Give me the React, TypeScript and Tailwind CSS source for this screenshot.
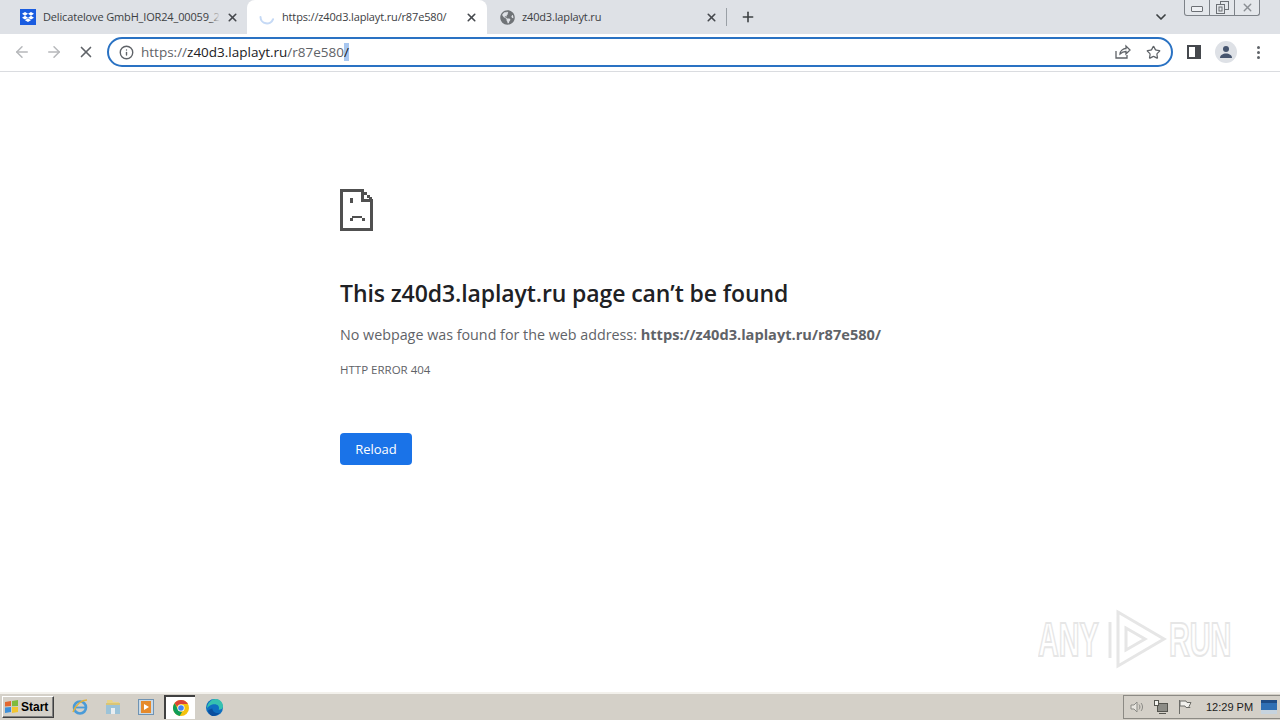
import { ArrowLeft, ArrowRight, ChevronDown, Info, Plus, Star, X } from "lucide-react";
import { FaDropbox, FaGlobeAmericas } from "react-icons/fa";

const sans = "font-['Open_Sans','Noto_Sans',sans-serif]";

function Spinner() {
  return (
    <svg width="16" height="16" viewBox="0 0 16 16" fill="none">
      <path d="M1.5 8a6.5 6.5 0 0 0 12.6 2.2" stroke="#c5d9f5" strokeWidth="2" strokeLinecap="round" />
    </svg>
  );
}

function Tab({ title, active, icon, fade }: { title: string; active?: boolean; icon: React.ReactNode; fade?: boolean }) {
  return (
    <div
      className={`flex items-center h-[34px] pl-3 gap-[7px] shrink-0 ${
        active ? "w-[240px] pr-[9px] bg-white rounded-t-[8px]" : "w-[239px] pr-[8px]"
      }`}
    >
      <span className="w-4 h-4 flex items-center justify-center shrink-0">{icon}</span>
      <span className="relative flex-1 min-w-0 whitespace-nowrap text-[11px] tracking-[-0.15px] text-[#3c4043] leading-4">
        {title}
        {fade && <span className="absolute right-[-1px] top-0 h-full w-[10px] bg-gradient-to-r from-transparent to-[#dee1e6]" />}
      </span>
      <X size={13} strokeWidth={3} className="text-[#45484d] shrink-0" />
    </div>
  );
}

function WindowControls() {
  return (
    <div className="flex self-start h-4 w-[76px] mr-[20px] ml-[15px] border border-t-0 border-[#7d8288] rounded-b-[3px] bg-[#e4e7eb]">
      <div className="w-[25px] flex items-center justify-center border-r border-[#7d8288]">
        <span className="w-[12px] h-[6px] mt-[3px] border border-[#6c7075] rounded-[1px] bg-[#eef0f3]" />
      </div>
      <div className="w-[25px] flex items-center justify-center border-r border-[#7d8288]">
        <svg width="13" height="13" viewBox="0 0 13 13" fill="none" stroke="#6c7075">
          <rect x="4.5" y="0.5" width="8" height="8" />
          <rect x="0.5" y="3.5" width="8" height="9" fill="#e4e7eb" />
          <rect x="3" y="6" width="3" height="4" />
        </svg>
      </div>
      <div className="flex-1 flex items-center justify-center">
        <X size={13} strokeWidth={2.5} className="text-[#8a8e93]" />
      </div>
    </div>
  );
}

function SadFile() {
  // pixel style page icon from the chrome error screen
  return (
    <svg width="33" height="42" viewBox="0 0 33 42" fill="#505050" shapeRendering="crispEdges">
      <rect x="0" y="0" width="22" height="3" />
      <rect x="0" y="0" width="3" height="42" />
      <rect x="0" y="39" width="33" height="3" />
      <rect x="30" y="10" width="3" height="32" />
      <rect x="21" y="0" width="3" height="13" />
      <rect x="21" y="10" width="12" height="3" />
      <rect x="24" y="3" width="3" height="3" />
      <rect x="27" y="6" width="3" height="3" />
      <rect x="29" y="8" width="3" height="3" />
      <rect x="10" y="9" width="3" height="5" />
      <rect x="12" y="27" width="10" height="2" />
      <rect x="10" y="29" width="3" height="3" />
      <rect x="22" y="29" width="3" height="3" />
    </svg>
  );
}

function ChromeLogo() {
  return (
    <svg width="16" height="16" viewBox="0 0 16 16">
      <circle cx="8" cy="8" r="8" fill="#f4c20d" />
      <path d="M8 0a8 8 0 0 1 6.93 4H8a4 4 0 0 0-3.8 2.8L1.6 3.2A8 8 0 0 1 8 0z" fill="#db4437" />
      <path d="M1.6 3.2 5 9.6a4 4 0 0 0 4.2 2.2L6.7 15.9A8 8 0 0 1 1.6 3.2z" fill="#0f9d58" />
      <circle cx="8" cy="8" r="3.6" fill="#fff" />
      <circle cx="8" cy="8" r="2.8" fill="#4285f4" />
    </svg>
  );
}

function TaskbarIcons() {
  return (
    <div className="flex items-center ml-[17px]">
      {/* ie */}
      <svg width="18" height="18" viewBox="0 0 18 18" fill="none" className="mr-[16px]">
        <circle cx="9" cy="9.5" r="6" stroke="#4a9bd8" strokeWidth="2.6" />
        <rect x="4" y="8.6" width="10.5" height="1.8" fill="#4a9bd8" />
        <path d="M2 14C5 6 11 2 16 2" stroke="#e3b23c" strokeWidth="1.5" />
      </svg>
      {/* explorer */}
      <svg width="16" height="16" viewBox="0 0 16 16" className="mr-[17px]">
        <path d="M2 1h5l1 2h6v3H2z" fill="#e8d48a" />
        <path d="M1 6h14v9H1z" fill="#9cc3d8" />
        <rect x="6" y="9" width="4" height="6" fill="#e9eef1" />
        <rect x="1" y="4" width="14" height="2" fill="#d9c577" />
      </svg>
      {/* media player */}
      <svg width="16" height="16" viewBox="0 0 16 16" className="mr-[10px]">
        <rect x="0.5" y="0.5" width="15" height="15" fill="#c9d9e6" stroke="#6f93b3" />
        <rect x="3" y="2" width="10" height="12" fill="#e58a2c" />
        <path d="M6 5l5 3-5 3z" fill="#fff" />
      </svg>
      {/* chrome, pressed */}
      <div className="w-[31px] h-[24px] flex items-center justify-center bg-white border-2 border-b-0 border-r-0 border-[#404040] mr-[11px]">
        <ChromeLogo />
      </div>
      {/* edge */}
      <svg width="17" height="17" viewBox="0 0 16 16">
        <circle cx="8" cy="8" r="8" fill="#0f6fc0" />
        <path d="M1 9C1 3 6 0 9 0c4 0 7 3 7 7 0 2-2 3-4 3 1-3-1-5-4-5-3 0-6 2-7 4z" fill="#35c1b0" />
        <path d="M6 9c0 3 3 5 7 4-2 2-4 3-6 3-3 0-5-3-5-5 1-1 3-2 4-2z" fill="#0b4f9e" />
      </svg>
    </div>
  );
}

function Tray() {
  return (
    <div className="flex items-center h-[24px] ml-auto w-[157px] border border-[#8c8a84] border-r-0 pl-[5px] gap-[8px]">
      <svg width="16" height="16" viewBox="0 0 16 16" fill="none" stroke="#8b8b86" className="shrink-0">
        <path d="M2 6h3l3-3v10l-3-3H2z" fill="#e8e6e0" />
        <path d="M10 5.5c1.2 1.500 1.200 3.500 0 5M12 4c2 2.400 2 5.600 0 8" />
      </svg>
      <svg width="16" height="16" viewBox="0 0 16 16" fill="none" stroke="#55554f" className="shrink-0">
        <rect x="4.500" y="4.500" width="10" height="8" fill="#8c8c86" />
        <rect x="1.500" y="1.500" width="4" height="5" fill="#f4f3ef" />
        <path d="M6 14.500h7" />
      </svg>
      <svg width="16" height="16" viewBox="0 0 16 16" fill="none" stroke="#6d6d68" className="shrink-0">
        <path d="M2.500 1v14" />
        <path d="M3 2h6l1 1.500h4l-2 4 1 1H9L8 7H3z" fill="#f1f0ec" />
      </svg>
      <span className="text-[11px] text-[#1c1c1c] ml-[5px] whitespace-nowrap font-['Liberation_Sans',sans-serif]">12:29 PM</span>
      <svg width="16" height="14" viewBox="0 0 16 14" className="shrink-0">
        <rect width="16" height="14" fill="#2f6fb4" />
        <rect y="10" width="16" height="4" fill="#c6d3de" />
        <rect x="0" y="0" width="16" height="3" fill="#1e4c86" />
      </svg>
    </div>
  );
}

export default function App() {
  return (
    <div className={`relative w-[1280px] h-[720px] overflow-hidden flex flex-col bg-white ${sans}`}>
      {/* tab strip */}
      <div className="flex items-start h-[34px] bg-[#dee1e6] pl-2 shrink-0">
        <Tab
          title="Delicatelove GmbH_IOR24_00059_2"
          fade
          icon={
            <span className="w-4 h-4 bg-[#1a5ce0] flex items-center justify-center">
              <FaDropbox size={12} className="text-white" />
            </span>
          }
        />
        <Tab title="https://z40d3.laplayt.ru/r87e580/" active icon={<Spinner />} />
        <Tab title="z40d3.laplayt.ru" icon={<FaGlobeAmericas size={15} className="text-[#6f7377]" />} />
        <span className="w-px h-[18px] mt-2 bg-[#9aa0a6] shrink-0" />
        <span className="ml-[13px] mt-[9px] shrink-0">
          <Plus size={16} strokeWidth={2.4} className="text-[#3c4043]" />
        </span>
        <span className="ml-auto mt-[9px] shrink-0">
          <ChevronDown size={16} strokeWidth={2.6} className="text-[#3c4043]" />
        </span>
        <WindowControls />
      </div>

      {/* toolbar */}
      <div className="flex items-center h-[38px] pb-[1px] bg-white border-b border-[#dadce0] shrink-0">
        <ArrowLeft size={18} strokeWidth={2} className="ml-[13px] text-[#b6b8bb]" />
        <ArrowRight size={18} strokeWidth={2} className="ml-[14px] text-[#b6b8bb]" />
        <X size={18} strokeWidth={2.2} className="ml-[14px] text-[#5f6368]" />
        <div className="flex items-center ml-[12px] w-[1066px] h-[30px] border-2 border-[#2a72c3] rounded-full pl-[10px] pr-[9px]">
          <Info size={15} strokeWidth={2.2} className="text-[#5f6368] shrink-0" />
          <div className="ml-[7px] text-[13.5px] leading-5 whitespace-nowrap text-[#5f6368]">
            https://<span className="text-[#202124]">z40d3.laplayt.ru</span>/r87e580<span className="bg-[#a8c7f0] text-[#202124]">/</span>
          </div>
          <svg width="17" height="16" viewBox="0 0 17 16" fill="none" stroke="#5f6368" strokeWidth="1.3" className="ml-auto">
            <path d="M2 7v7h11v-3" />
            <path d="M6 10c0-3 3-5.500 6-5.500V2l4 4-4 4V7.500C9.500 7.500 7.500 8.500 6 10z" />
          </svg>
          <Star size={15} strokeWidth={2} className="ml-[15px] mr-[1px] text-[#5f6368]" />
        </div>
        <svg width="14" height="14" viewBox="0 0 14 14" className="ml-[14px]">
          <rect x="1" y="1" width="12" height="12" fill="none" stroke="#45484d" strokeWidth="2" />
          <rect x="8" y="1" width="5" height="12" fill="#45484d" />
        </svg>
        <span className="ml-[14px] w-[22px] h-[22px] rounded-full bg-[#dee1e6] overflow-hidden flex items-center justify-center">
          <svg width="14" height="14" viewBox="0 0 14 14" fill="#45546e">
            <circle cx="7" cy="4" r="3" />
            <path d="M1 13c0-3 3-4.500 6-4.500s6 1.500 6 4.500z" />
          </svg>
        </span>
        <span className="ml-[20px] flex flex-col gap-[2px]">
          <span className="w-[3px] h-[3px] rounded-full bg-[#5f6368]" />
          <span className="w-[3px] h-[3px] rounded-full bg-[#5f6368]" />
          <span className="w-[3px] h-[3px] rounded-full bg-[#5f6368]" />
        </span>
      </div>

      {/* error page */}
      <main className="flex-1 pl-[340px] pt-[117px]">
        <SadFile />
        <h1 className="mt-[46px] text-[23px] tracking-[-0.1px] leading-[32px] font-semibold text-[#202124] whitespace-nowrap">
          This z40d3.laplayt.ru page can’t be found
        </h1>
        <p className="mt-[15px] text-[14.3px] leading-[20px] text-[#5f6368] whitespace-nowrap">
          No webpage was found for the web address: <strong className="text-[14.6px] font-bold">https://z40d3.laplayt.ru/r87e580/</strong>
        </p>
        <p className="mt-[17px] text-[11.5px] leading-[16px] text-[#5f6368]">HTTP ERROR 404</p>
        <button className="mt-[55px] w-[72px] h-[32px] pt-[1px] rounded-[4px] bg-[#1a73e8] text-[13px] text-white">Reload</button>
      </main>

      {/* taskbar */}
      <div className="flex items-center h-[28px] bg-[#d4d0c8] border-t-2 border-t-[#f3f1ec] shrink-0 pl-[2px]">
        <div className="flex items-center w-[52px] h-[22px] border border-[#fff] border-r-[#404040] border-b-[#404040] shadow-[inset_-1px_-1px_0_#808080] pl-[1px] gap-[1px]">
          <svg width="16" height="16" viewBox="0 0 16 16">
            <path d="M1 3l6-1v5l-6 .5z" fill="#e2672f" />
            <path d="M8 2l6-1v6l-6 .2z" fill="#7fba3c" />
            <path d="M1 8.500l6-.5v5l-6 1z" fill="#3d8fd9" />
            <path d="M8 8l6 0v5l-6 1z" fill="#f2c530" />
          </svg>
          <span className="font-['Liberation_Sans',sans-serif] text-[12px] font-bold text-black">Start</span>
        </div>
        <TaskbarIcons />
        <Tray />
      </div>

      {/* watermark */}
      <div className="absolute left-[1038px] top-[608px] flex items-center h-[64px] text-transparent font-['Liberation_Sans',sans-serif] text-[48px] font-bold [-webkit-text-stroke:2px_#e6e6e6]">
        <span className="w-[68px] origin-left scale-x-[.6] inline-block">ANY</span>
        <svg width="62" height="64" viewBox="0 0 62 64" fill="none" stroke="#e6e6e6" strokeWidth="3">
          <path d="M12 4v54l46-27z" />
          <path d="M20 20v22l19-11z" />
          <path d="M4 14v36" />
        </svg>
        <span className="ml-[1px] origin-left scale-x-[.6] inline-block">RUN</span>
      </div>
    </div>
  );
}
